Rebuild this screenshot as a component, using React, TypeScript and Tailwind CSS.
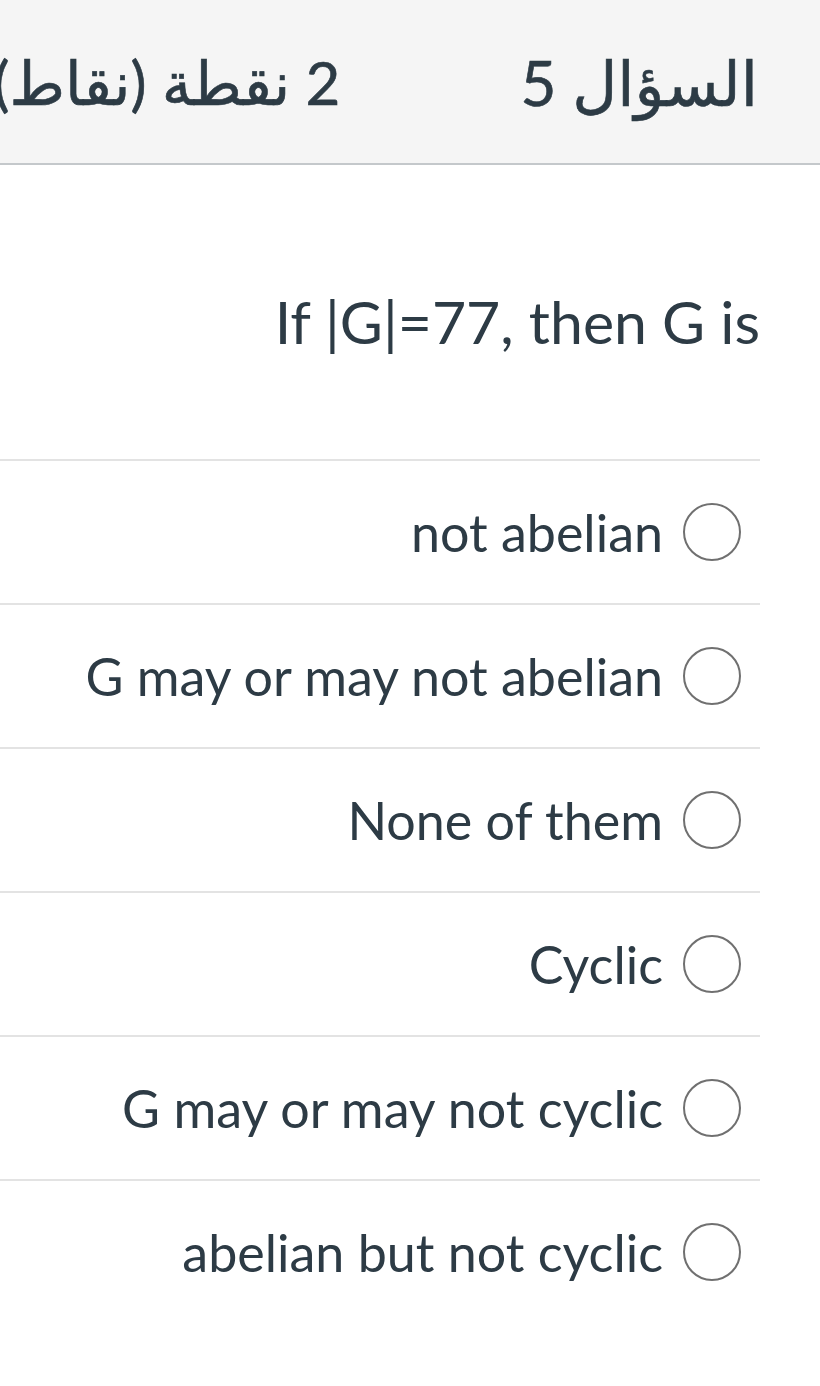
import React from "react";

const options = [
  "not abelian",
  "G may or may not abelian",
  "None of them",
  "Cyclic",
  "G may or may not cyclic",
  "abelian but not cyclic",
];

export default function App() {
  return (
    <div
      dir="rtl"
      className="w-[820px] h-[1386px] overflow-hidden bg-white text-[#2d3b45] font-['Lato','DejaVu_Sans',sans-serif]"
    >
      <div className="h-[165px] bg-[#f5f5f5] border-b-2 border-[#c4c8cb] flex items-center pr-[62px] gap-[180px] whitespace-nowrap">
        <div className="text-[62px] font-normal leading-none [-webkit-text-stroke:0.6px_#2d3b45]">السؤال 5</div>
        <div className="text-[60px] font-normal leading-none [-webkit-text-stroke:0.6px_#2d3b45]">2 نقطة (نقاط)</div>
      </div>
      <div className="pr-[60px]">
        <div className="pt-[125px] pb-[105px] text-[59px] leading-[64px]">If |G|=77, then G is</div>
        <div>
          {options.map((o) => (
            <div
              key={o}
              className="h-[144px] border-t-2 border-[#e3e3e3] flex items-center gap-[20px] pr-[19px]"
            >
              <span className="w-[58px] h-[58px] rounded-full border-[2.5px] border-[#707070] shrink-0 bg-white" />
              <span className="text-[52px] leading-none whitespace-nowrap">{o}</span>
            </div>
          ))}
        </div>
      </div>
    </div>
  );
}
